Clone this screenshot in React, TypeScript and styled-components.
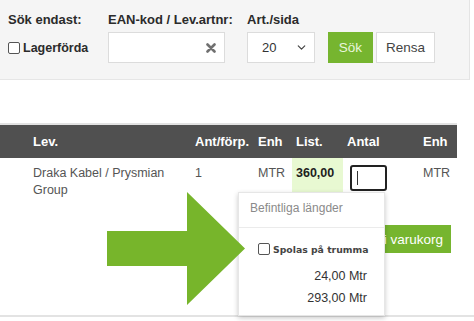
import styled, { createGlobalStyle } from 'styled-components'
import { ChevronDown } from 'lucide-react'

const GlobalStyle = createGlobalStyle`
  html, body {
    margin: 0;
    padding: 0;
    background: #fff;
  }
  body {
    font-family: "Liberation Sans", Arial, sans-serif;
    color: #333;
  }
`

const Page = styled.div`
  position: relative;
  width: 474px;
  height: 321px;
  overflow: hidden;
  background: #fff;
`

const SearchPanel = styled.div`
  display: flex;
  width: 461px;
  height: 67px;
  padding: 12px 0 0 8px;
  background: #f5f5f5;
  border-right: 1px solid #e4e4e4;
  border-bottom: 1px solid #e6e6e6;
`

const Field = styled.div<{ $width?: number }>`
  display: flex;
  flex-direction: column;
  gap: 5px;
  width: ${p => (p.$width ? `${p.$width}px` : 'auto')};
`

const Label = styled.div`
  font-size: 13px;
  font-weight: bold;
  line-height: 15px;
  color: #2b2b2b;
  white-space: nowrap;
`

const Controls = styled.div`
  display: flex;
  align-items: center;
  height: 31px;
`

const Check = styled.span<{ $size?: number }>`
  display: inline-block;
  width: ${p => p.$size ?? 10}px;
  height: ${p => p.$size ?? 10}px;
  border: 1px solid #555;
  border-radius: 2px;
  background: #fff;
  margin-right: 3px;
  flex: none;
`

const CheckLabel = styled.span`
  font-size: 12.5px;
  font-weight: bold;
  color: #2b2b2b;
`

const TextBox = styled.div`
  display: flex;
  align-items: center;
  justify-content: flex-end;
  box-sizing: border-box;
  width: 117px;
  height: 31px;
  padding-right: 8px;
  background: #fff;
  border: 1px solid #dcdcdc;
`

const Select = styled.div`
  display: flex;
  align-items: center;
  justify-content: space-between;
  box-sizing: border-box;
  width: 68px;
  height: 31px;
  padding: 0 6px 0 14px;
  margin-right: 13px;
  background: #fff;
  border: 1px solid #dcdcdc;
  font-size: 13px;
  color: #333;
`

const Button = styled.div<{ $primary?: boolean; $width: number }>`
  display: flex;
  align-items: center;
  justify-content: center;
  box-sizing: border-box;
  width: ${p => p.$width}px;
  height: 31px;
  margin-right: 3px;
  font-size: 13.5px;
  background: ${p => (p.$primary ? '#76b52f' : '#fff')};
  color: ${p => (p.$primary ? '#e9f6dc' : '#444')};
  border: 1px solid ${p => (p.$primary ? '#76b52f' : '#dcdcdc')};
`

const Table = styled.div`
  width: 457px;
  margin-top: 43px;
  border-top: 2px solid #e2e2e2;
`

const Columns = styled.div`
  display: grid;
  grid-template-columns: 29px 162px 63px 38px 51px 76px 38px;
`

const HeadRow = styled(Columns)`
  height: 33px;
  align-items: center;
  background: #505050;
  color: #fff;
  font-size: 13px;
  font-weight: bold;
`

const HeadCell = styled.div`
  padding-left: 4px;
  white-space: nowrap;
`

const Row = styled.div`
  width: 474px;
  height: 157px;
  border-bottom: 2px solid #e3e3e3;
`

const Cell = styled.div<{ $highlight?: boolean; $bold?: boolean }>`
  box-sizing: border-box;
  height: 35px;
  padding: 7px 0 0 4px;
  font-size: 12.5px;
  line-height: 17px;
  color: ${p => (p.$bold ? '#1e1e1e' : '#555')};
  font-weight: ${p => (p.$bold ? 'bold' : 'normal')};
  background: ${p => (p.$highlight ? '#e8f9d2' : 'transparent')};
`

const QtyBox = styled.div`
  display: flex;
  align-items: center;
  box-sizing: border-box;
  width: 37px;
  height: 26px;
  margin: 7px 0 0 7px;
  padding-left: 5px;
  border: 2px solid #222;
  border-radius: 3px;
`

const Caret = styled.span`
  width: 1px;
  height: 14px;
  background: #333;
`

const Actions = styled.div`
  display: flex;
  justify-content: flex-end;
  width: 457px;
  padding-top: 32px;
`

const CartButton = styled.div`
  display: flex;
  align-items: center;
  height: 28px;
  padding: 0 8px;
  margin-right: 6px;
  background: #76b52f;
  color: #fff;
  font-size: 13.5px;
`

const Popup = styled.div`
  position: absolute;
  left: 238px;
  top: 192px;
  box-sizing: border-box;
  width: 147px;
  height: 124px;
  background: #fff;
  border: 1px solid #e6e6e6;
  box-shadow: 0 2px 5px rgba(0, 0, 0, 0.22);
`

const PopupTitle = styled.div`
  padding: 8px 11px 12px;
  font-size: 12px;
  line-height: 14px;
  color: #8a8a8a;
  border-bottom: 1px solid #ebebeb;
`

const PopupCheck = styled.div`
  display: flex;
  align-items: center;
  height: 14px;
  padding: 14px 0 0 19px;
`

const PopupCheckLabel = styled.span`
  font-family: "DejaVu Sans", sans-serif;
  font-size: 9.3px;
  font-weight: bold;
  color: #444;
`

const Lengths = styled.div`
  margin-top: 9px;
  padding-right: 17px;
  text-align: right;
  font-size: 12.5px;
  line-height: 22px;
  color: #333;
`

const Arrow = styled.svg`
  position: absolute;
  left: 107px;
  top: 192px;
  z-index: 2;
`

const ClearIcon = () => (
  <svg width="10" height="10" viewBox="0 0 10 10">
    <path d="M1.5 1.5 L8.5 8.5 M8.5 1.5 L1.5 8.5" stroke="#707070" strokeWidth="2.6" strokeLinecap="round" />
  </svg>
)

export default function App() {
  return (
    <Page>
      <GlobalStyle />
      <SearchPanel>
        <Field $width={100}>
          <Label>Sök endast:</Label>
          <Controls>
            <Check />
            <CheckLabel>Lagerförda</CheckLabel>
          </Controls>
        </Field>
        <Field $width={139}>
          <Label>EAN-kod / Lev.artnr:</Label>
          <Controls>
            <TextBox>
              <ClearIcon />
            </TextBox>
          </Controls>
        </Field>
        <Field>
          <Label>Art./sida</Label>
          <Controls>
            <Select>
              20
              <ChevronDown size={13} strokeWidth={2.2} color="#444" />
            </Select>
            <Button $primary $width={45}>Sök</Button>
            <Button $width={59}>Rensa</Button>
          </Controls>
        </Field>
      </SearchPanel>

      <Table>
        <HeadRow>
          <HeadCell />
          <HeadCell>Lev.</HeadCell>
          <HeadCell>Ant/förp.</HeadCell>
          <HeadCell>Enh</HeadCell>
          <HeadCell>List.</HeadCell>
          <HeadCell>Antal</HeadCell>
          <HeadCell>Enh</HeadCell>
        </HeadRow>
        <Row>
          <Columns>
            <Cell />
            <Cell>Draka Kabel / Prysmian<br />Group</Cell>
            <Cell>1</Cell>
            <Cell>MTR</Cell>
            <Cell $highlight $bold>360,00</Cell>
            <div>
              <QtyBox>
                <Caret />
              </QtyBox>
            </div>
            <Cell>MTR</Cell>
          </Columns>
          <Actions>
            <CartButton>Lägg i varukorg</CartButton>
          </Actions>
        </Row>
      </Table>

      <Popup>
        <PopupTitle>Befintliga längder</PopupTitle>
        <PopupCheck>
          <Check $size={10} />
          <PopupCheckLabel>Spolas på trumma</PopupCheckLabel>
        </PopupCheck>
        <Lengths>
          <div>24,00 Mtr</div>
          <div>293,00 Mtr</div>
        </Lengths>
      </Popup>

      <Arrow width="139" height="114" viewBox="0 0 139 114">
        <path d="M0 39 H80 V0 L138 56.5 L80 113 V74 H0 Z" fill="#77b52b" />
      </Arrow>
    </Page>
  )
}
